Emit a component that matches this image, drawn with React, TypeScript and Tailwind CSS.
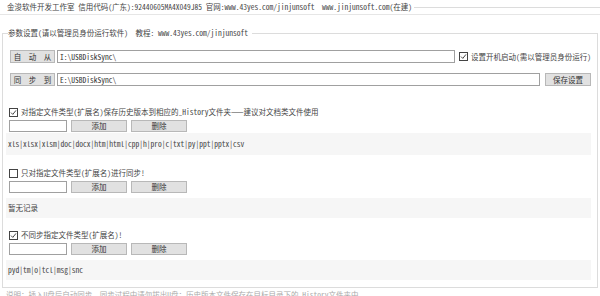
import React from "react";

const font = "font-['Noto_Sans_Mono_CJK_SC','Noto_Sans_CJK_SC','Liberation_Mono',monospace]";

const Check: React.FC<{ checked?: boolean }> = ({ checked }) => (
  <span className="w-[9px] h-[9px] border border-[#444] bg-white flex items-center justify-center shrink-0">
    {checked && (
      <svg width="7" height="7" viewBox="0 0 7 7">
        <path d="M1 3.6 L2.8 5.4 L6 1.4" fill="none" stroke="#333" strokeWidth="0.9" />
      </svg>
    )}
  </span>
);

const Btn: React.FC<{ label: string; w: string }> = ({ label, w }) => (
  <button className={`${w} h-full bg-[#e1e1e1] border border-[#b8b8b8] text-[7.5px] leading-none text-[#333] flex items-center justify-center whitespace-pre`}>
    {label}
  </button>
);

const FilterBlock: React.FC<{
  label: string;
  checked: boolean;
  list: string;
  mt: string;
  panel: string;
}> = ({ label, checked, list, mt, panel }) => (
  <>
    <div className={`${mt} h-[10px] flex items-center gap-[3px] pl-[3px]`}>
      <Check checked={checked} />
      <span>{label}</span>
    </div>
    <div className="mt-[3px] h-[12px] flex items-stretch pl-[3px] gap-[4px]">
      <input className="w-[58px] border border-[#a0a0a0] bg-white" />
      <Btn label="添加" w="w-[56px]" />
      <Btn label="删除" w="w-[56px]" />
    </div>
    <div className={`${panel} mr-[3px] bg-[#f6f6f6] flex items-center pl-[2px]`}>
      {list}
    </div>
  </>
);

export default function App() {
  return (
    <div className={`w-[600px] h-[296px] overflow-hidden bg-white text-[7.5px] leading-none text-[#444] ${font}`}>
      <div className="h-[15px] flex items-center pl-[7px] border-b border-[#e6e6e6]">
        <span className="whitespace-pre">
          金浚软件开发工作室 信用代码(广东):92440605MA4X049J85 官网:www.43yes.com/jinjunsoft  www.jinjunsoft.com(在建)
        </span>
        <span className="flex-1 h-px bg-[#dcdcdc] ml-[2px]" />
      </div>

      <fieldset className="mt-[13px] mx-[2px] h-[260px] border border-[#dcdcdc] px-[3px]">
        <legend className="ml-[2px] pr-[4px] h-[10px] flex items-center whitespace-pre">
          参数设置(请以管理员身份运行软件)  教程: www.43yes.com/jinjunsoft
        </legend>

        <div className="mt-[12px] h-[13px] flex items-stretch pl-[4px]">
          <Btn label="自  动  从" w="w-[45px]" />
          <input
            readOnly
            value="I:\USBDiskSync\"
            className={`ml-[2px] w-[398px] border border-[#a0a0a0] bg-white px-[2px] text-[7.5px] text-[#333] ${font}`}
          />
          <div className="ml-[4px] flex items-center gap-[3px]">
            <Check checked />
            <span>设置开机启动(需以管理员身份运行)</span>
          </div>
        </div>

        <div className="mt-[10px] h-[13px] flex items-stretch pl-[4px]">
          <Btn label="同  步  到" w="w-[45px]" />
          <input
            readOnly
            value="E:\USBDiskSync\"
            className={`ml-[2px] w-[483px] border border-[#a0a0a0] bg-white px-[2px] text-[7.5px] text-[#333] ${font}`}
          />
          <div className="ml-[5px]">
            <Btn label="保存设置" w="w-[46px]" />
          </div>
        </div>

        <FilterBlock
          mt="mt-[21px]"
          checked
          label="对指定文件类型(扩展名)保存历史版本到相应的_History文件夹——建议对文档类文件使用"
          list="xls|xlsx|xlsm|doc|docx|htm|html|cpp|h|pro|c|txt|py|ppt|pptx|csv"
          panel="mt-[1px] h-[22px]"
        />
        <FilterBlock
          mt="mt-[13px]"
          checked={false}
          label="只对指定文件类型(扩展名)进行同步!"
          list="暂无记录"
          panel="mt-[5px] h-[20px]"
        />
        <FilterBlock
          mt="mt-[12px]"
          checked
          label="不同步指定文件类型(扩展名)!"
          list="pyd|tm|o|tcl|msg|snc"
          panel="mt-[5px] h-[20px]"
        />
      </fieldset>

      <div className="mt-[3px] pl-[6px] text-[#aaa] whitespace-pre">
        说明：插入U盘后自动同步，同步过程中请勿拔出U盘；历史版本文件保存在目标目录下的_History文件夹中。
      </div>
    </div>
  );
}
